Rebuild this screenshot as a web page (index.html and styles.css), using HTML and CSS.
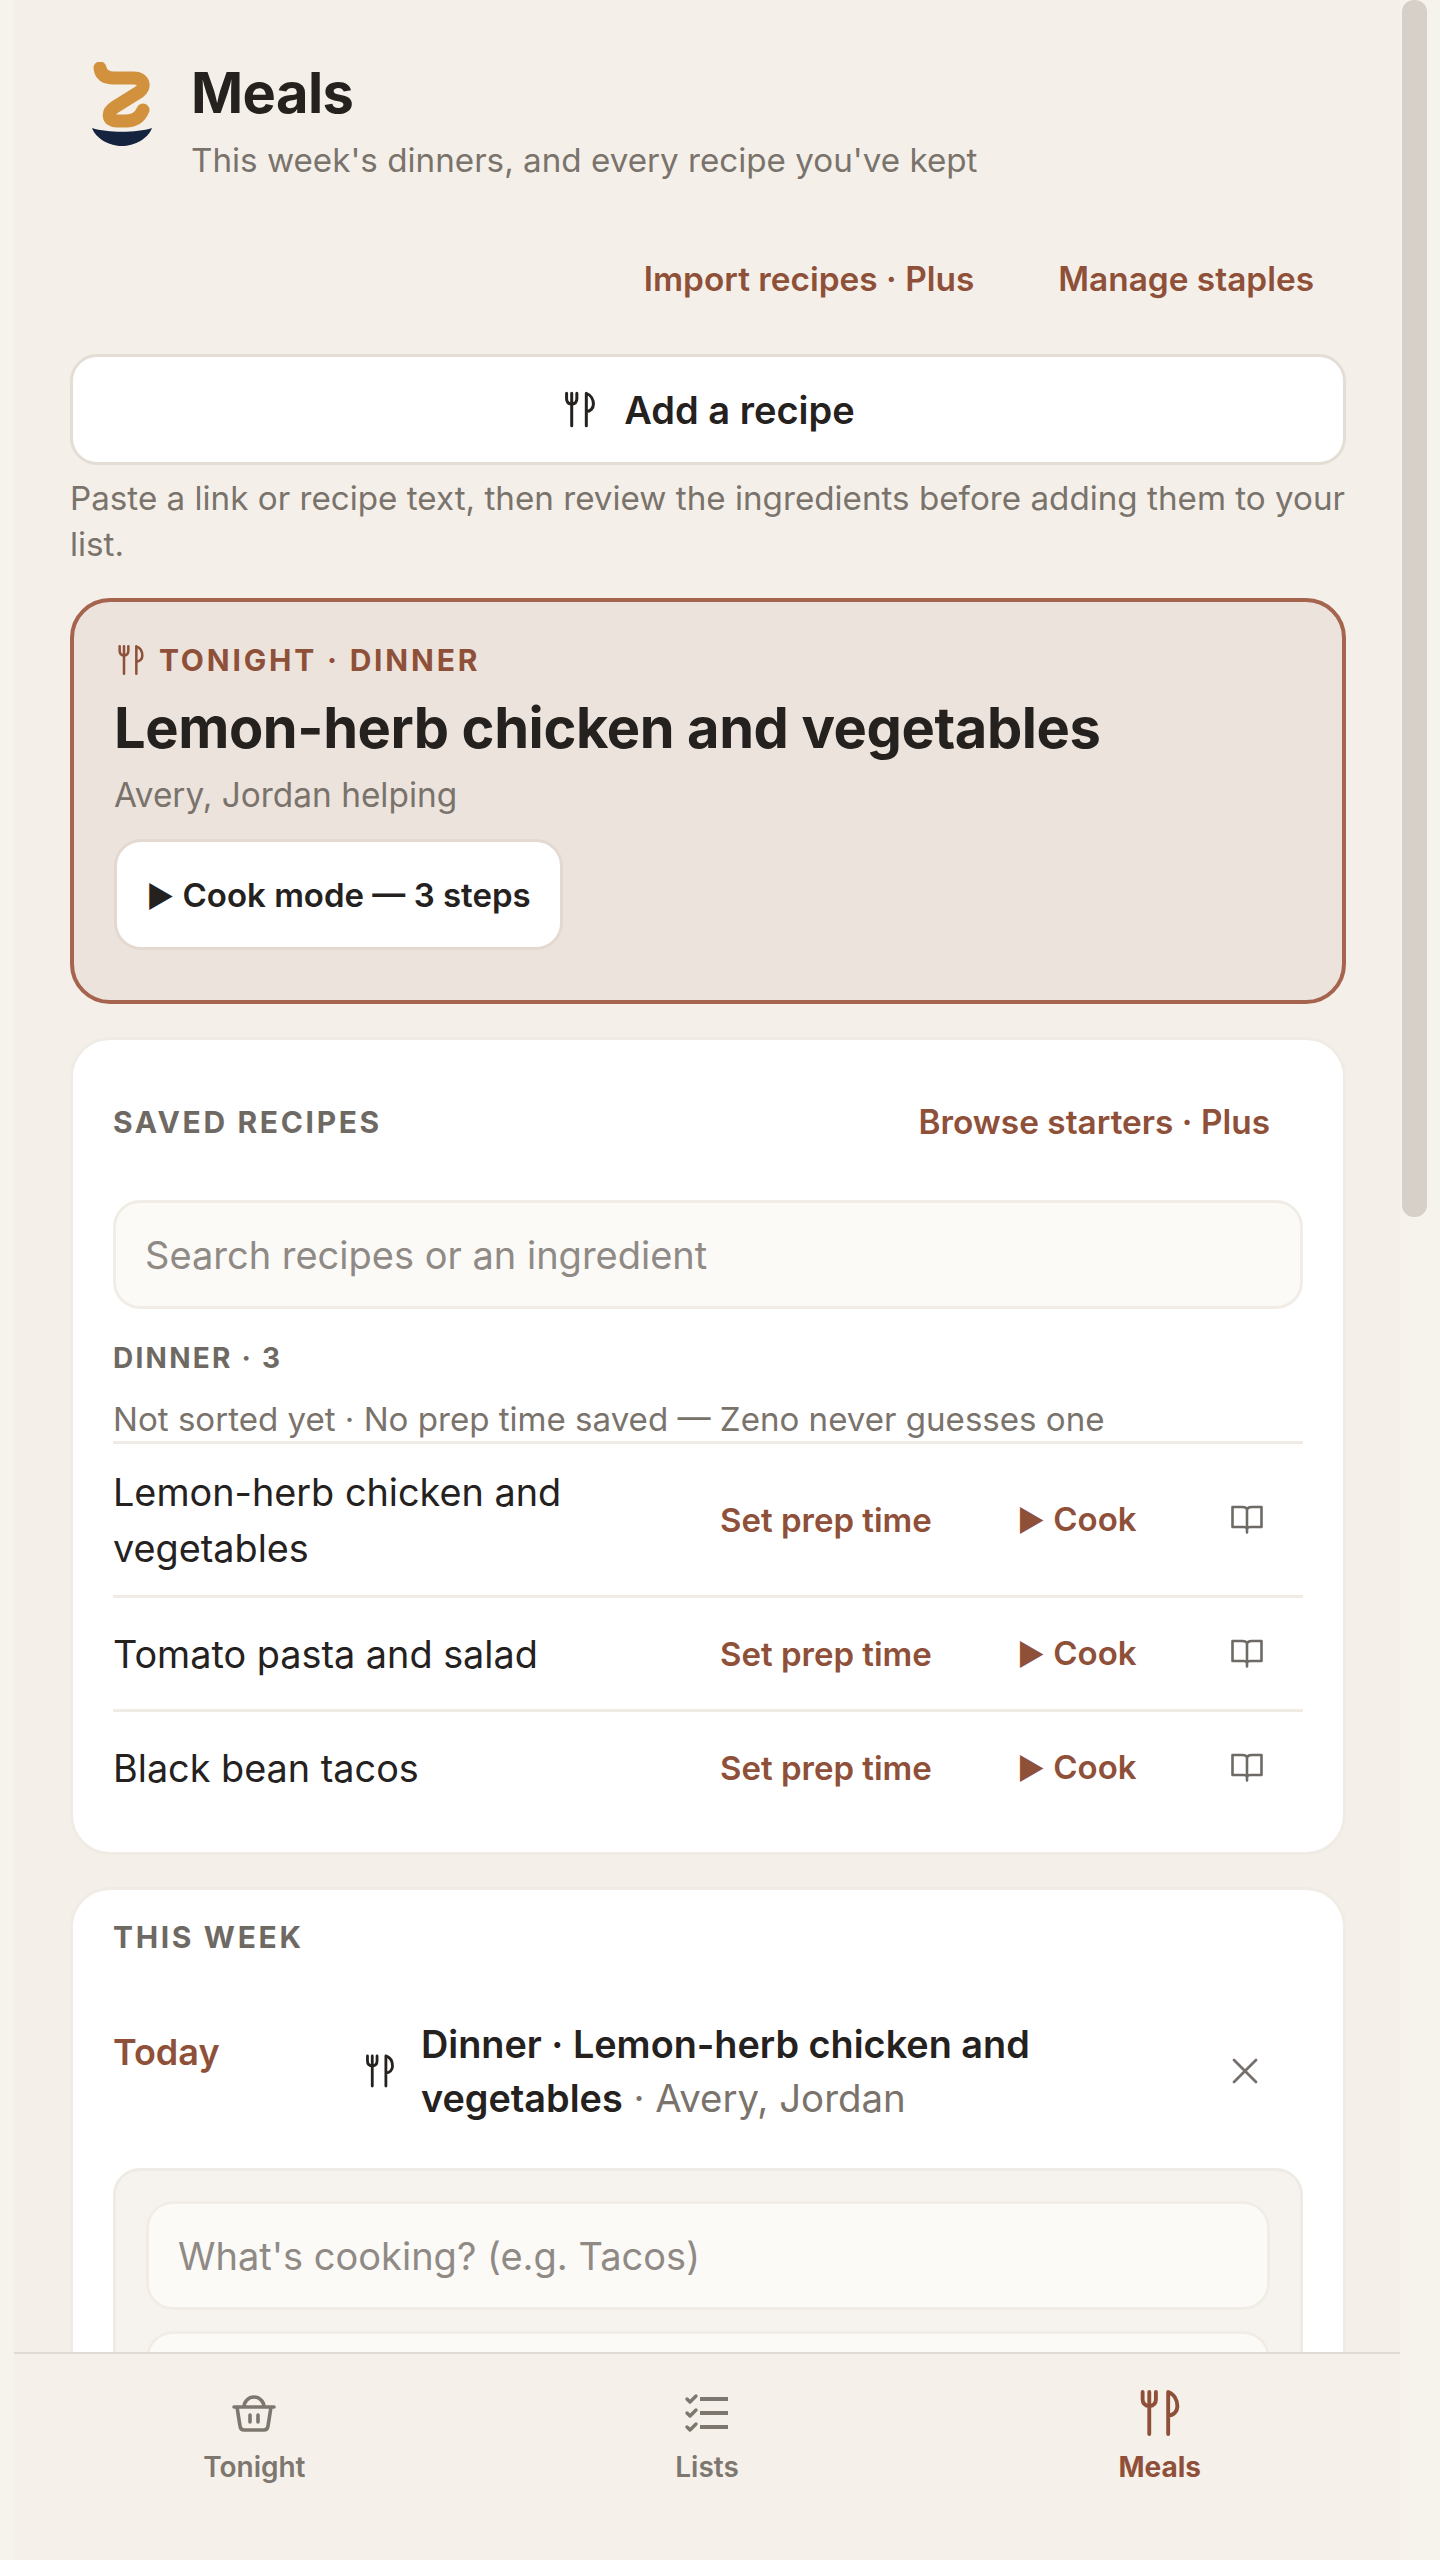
FILE: index.html

```html
<!DOCTYPE html>
<html lang="en">
<head>
    <meta charset="UTF-8" />
    <meta name="viewport" content="width=device-width, initial-scale=1.0" />
    <title>Meals</title>
    <link rel="stylesheet" href="styles.css">
</head>
<body>
    <svg class="sprites" aria-hidden="true">
        <symbol id="utensils" viewBox="0 0 38 45">
            <path d="M2 2v7q0 6 6.500 7 6.500-1 6.500-7V2M8.500 2v41" fill="none" stroke="currentColor" stroke-width="3.800" stroke-linecap="round"/>
            <path d="M27 43V2c6 2 9 8 9 14 0 5-4 9-9 9" fill="none" stroke="currentColor" stroke-width="3.800" stroke-linecap="round" stroke-linejoin="round"/>
        </symbol>
        <symbol id="book" viewBox="0 0 32 29">
            <path d="M1.500 2h10c2 0 4.500 1 4.500 3 0-2 2.500-3 4.500-3h10v20h-11c-2 0-3.500 1-3.500 2 0-1-1.500-2-3.500-2h-11zM16 5v22.500" fill="none" stroke="currentColor" stroke-width="2.600" stroke-linejoin="round" stroke-linecap="round"/>
        </symbol>
    </svg>

    <div class="app">
        <main class="main">
            <header class="page-head">
                <svg class="logo" viewBox="0 0 68 86" aria-hidden="true">
                    <path d="M12 6C13 13 18 16 26 16L46 16C56 16 58 25 51 30L27 45C19 50 19 59 29 59L38 59C46 59 52 55 55 48" fill="none" stroke="#d2913c" stroke-width="13" stroke-linecap="round" stroke-linejoin="round"/>
                    <path d="M4 66C20 71 48 71 64 66 60 77 46 84 34 84 22 84 8 77 4 66z" fill="#16233f"/>
                </svg>
                <div>
                    <h1 class="page-title">Meals</h1>
                    <p class="page-sub">This week's dinners, and every recipe you've kept</p>
                </div>
            </header>

            <div class="top-links">
                <a class="link">Import recipes · Plus</a>
                <a class="link">Manage staples</a>
            </div>

            <button class="add-btn">
                <svg class="icon-utensils-md"><use href="#utensils"/></svg>
                Add a recipe
            </button>
            <p class="hint">Paste a link or recipe text, then review the ingredients before adding them to your list.</p>

            <section class="tonight">
                <div class="tonight-label">
                    <svg class="icon-utensils-sm"><use href="#utensils"/></svg>
                    Tonight · Dinner
                </div>
                <h2 class="tonight-title">Lemon-herb chicken and vegetables</h2>
                <p class="tonight-who">Avery, Jordan helping</p>
                <button class="cook-btn"><span class="play">▶</span> Cook mode — 3 steps</button>
            </section>

            <section class="card saved">
                <div class="card-head">
                    <h3 class="section-label">Saved recipes</h3>
                    <a class="link browse">Browse starters · Plus</a>
                </div>
                <input class="field" placeholder="Search recipes or an ingredient" />
                <h4 class="group-label">Dinner · 3</h4>
                <p class="group-note">Not sorted yet · No prep time saved — Zeno never guesses one</p>

                <div class="recipe-row">
                    <span class="recipe-name">Lemon-herb chicken and vegetables</span>
                    <a class="link act-prep">Set prep time</a>
                    <a class="link act-cook"><span class="play">▶</span> Cook</a>
                    <svg class="icon-book"><use href="#book"/></svg>
                </div>
                <div class="recipe-row">
                    <span class="recipe-name">Tomato pasta and salad</span>
                    <a class="link act-prep">Set prep time</a>
                    <a class="link act-cook"><span class="play">▶</span> Cook</a>
                    <svg class="icon-book"><use href="#book"/></svg>
                </div>
                <div class="recipe-row">
                    <span class="recipe-name">Black bean tacos</span>
                    <a class="link act-prep">Set prep time</a>
                    <a class="link act-cook"><span class="play">▶</span> Cook</a>
                    <svg class="icon-book"><use href="#book"/></svg>
                </div>
            </section>

            <section class="card week">
                <h3 class="section-label">This week</h3>
                <div class="day-row">
                    <span class="day-name">Today</span>
                    <svg class="icon-utensils-day"><use href="#utensils"/></svg>
                    <p class="day-meal"><b>Dinner · Lemon-herb chicken and vegetables</b> · Avery, Jordan</p>
                    <svg class="icon-close" viewBox="0 0 26 26"><path d="M2 2l22 22M24 2L2 24" fill="none" stroke="currentColor" stroke-width="2.800" stroke-linecap="round"/></svg>
                </div>
                <div class="add-form">
                    <input class="field" placeholder="What's cooking? (e.g. Tacos)" />
                    <input class="field" />
                </div>
            </section>
        </main>

        <nav class="tabs">
            <a class="tab">
                <svg class="tab-icon" viewBox="0 0 46 46">
                    <path d="M3 17h40M6 17l3 19q.6 4 4 4h20q3.400 0 4-4l3-19M13 17a10 10 0 0 1 20 0M19 25v7M27 25v7" fill="none" stroke="currentColor" stroke-width="3.600" stroke-linecap="round" stroke-linejoin="round"/>
                </svg>
                Tonight
            </a>
            <a class="tab">
                <svg class="tab-icon" viewBox="0 0 46 46">
                    <path d="M3 9l3 3 6-6M3 23l3 3 6-6M3 37l3 3 6-6" fill="none" stroke="currentColor" stroke-width="3.400" stroke-linecap="round" stroke-linejoin="round"/>
                    <path d="M16 9h28M16 23h28M16 37h28" fill="none" stroke="currentColor" stroke-width="3.800"/>
                </svg>
                Lists
            </a>
            <a class="tab tab-active">
                <svg class="tab-icon"><use href="#utensils"/></svg>
                Meals
            </a>
        </nav>
    </div>

    <div class="scroll-thumb"></div>
</body>
</html>
```

FILE: styles.css

```css
* {
    box-sizing: border-box;
}
html, body {
    margin: 0;
    height: 2560px;
    overflow: hidden;
}
body {
    background: #f6f2ec;
    font-family: Inter, "Noto Sans", sans-serif;
    color: #24211e;
}
.sprites {
    display: none;
}
.app {
    position: relative;
    margin-left: 14px;
    width: 1386px;
    height: 2560px;
    overflow: hidden;
    background: #f4f0e9;
}
.main {
    width: 1332px;
    padding: 60px 0 0 56px;
}
h1, h2, h3, h4, p {
    margin: 0;
}
.page-head {
    display: flex;
    align-items: flex-start;
    padding-left: 18px;
    gap: 35px;
}
.logo {
    width: 68px;
    height: 86px;
    margin-top: 2px;
    flex: none;
}
.page-title {
    font-size: 56px;
    line-height: 66px;
    font-weight: 700;
    letter-spacing: -0.01em;
}
.page-sub {
    margin-top: 11px;
    font-size: 33.2px;
    line-height: 46px;
    color: #7a736c;
}
.link {
    font-size: 33.4px;
    line-height: 46px;
    font-weight: 600;
    color: #8f5039;
}
.play {
    font-size: 0.9em;
}
.top-links {
    display: flex;
    justify-content: flex-end;
    gap: 84px;
    margin-top: 73px;
    padding-right: 32px;
}
.add-btn {
    display: flex;
    align-items: center;
    justify-content: center;
    gap: 29px;
    width: 100%;
    height: 111px;
    margin-top: 52px;
    padding-left: 10px;
    background: #fff;
    border: 3px solid #e3ddd5;
    border-radius: 27px;
    font: 600 38px Inter, sans-serif;
    color: #24211e;
}
.icon-utensils-md {
    width: 30px;
    height: 39px;
}
.hint {
    margin-top: 10px;
    font-size: 33.2px;
    line-height: 46px;
    color: #7a736c;
}
.tonight {
    margin-top: 31px;
    height: 406px;
    padding: 38px 40px 0;
    background: #ece3dc;
    border: 4px solid #a5644e;
    border-radius: 40px;
}
.tonight-label {
    display: flex;
    align-items: center;
    gap: 15px;
    font-size: 30px;
    line-height: 40px;
    font-weight: 700;
    letter-spacing: 2.8px;
    text-transform: uppercase;
    color: #8f5039;
}
.icon-utensils-sm {
    width: 26px;
    height: 30px;
    margin-left: 4px;
}
.tonight-title {
    margin-top: 14px;
    font-size: 56px;
    line-height: 68px;
    font-weight: 700;
    letter-spacing: -0.4px;
}
.tonight-who {
    margin-top: 10px;
    font-size: 33.4px;
    line-height: 46px;
    color: #7a736c;
}
.cook-btn {
    display: block;
    height: 111px;
    width: 449px;
    margin-top: 21px;
    background: #fff;
    border: 3px solid #e3d9d1;
    border-radius: 27px;
    font: 600 33px Inter, "DejaVu Sans", sans-serif;
    color: #24211e;
}
.card {
    background: #fff;
    border: 3px solid #f0ebe4;
    border-radius: 40px;
    padding: 0 40px;
}
.saved {
    margin-top: 33px;
    padding-top: 59px;
    padding-bottom: 29px;
}
.card-head {
    display: flex;
    align-items: center;
    justify-content: space-between;
    padding-right: 33px;
}
.section-label {
    font-size: 30px;
    line-height: 46px;
    font-weight: 700;
    letter-spacing: 2.65px;
    text-transform: uppercase;
    color: #6f6963;
}
.field {
    display: block;
    width: 100%;
    height: 109px;
    padding: 0 29px;
    background: #fcfaf7;
    border: 3px solid #f1ede6;
    border-radius: 27px;
    font: 400 38px Inter, sans-serif;
    color: #24211e;
}
.field::placeholder {
    color: #8f8a85;
    opacity: 1;
}
.saved .field {
    margin-top: 55px;
}
.group-label {
    margin-top: 29px;
    font-size: 28px;
    line-height: 40px;
    font-weight: 700;
    letter-spacing: 0.08em;
    text-transform: uppercase;
    color: #6f6963;
}
.group-note {
    margin-top: 18px;
    font-size: 33.1px;
    line-height: 46px;
    margin-bottom: -1px;
    color: #7a736c;
}
.recipe-row {
    display: flex;
    align-items: center;
    min-height: 114px;
    padding: 19.5px 0;
    border-top: 3px solid #f0ece5;
}
.recipe-name {
    flex: 1;
    padding-right: 100px;
    font-size: 37.8px;
    line-height: 56px;
}
.act-prep {
    width: 297px;
    font-size: 33px;
}
.act-cook {
    width: 214px;
    font-size: 33px;
    font-family: Inter, "DejaVu Sans", sans-serif;
}
.icon-book {
    width: 32px;
    height: 29px;
    margin-right: 40px;
    color: #6e6a65;
}
.week {
    margin-top: 32px;
    padding-top: 27px;
    padding-bottom: 30px;
}
.week .section-label {
    line-height: 40px;
}
.day-row {
    display: flex;
    align-items: center;
    margin-top: 60px;
}
.day-name {
    width: 253px;
    align-self: flex-start;
    margin-top: 8px;
    font-size: 36px;
    line-height: 54px;
    font-weight: 600;
    color: #8f5039;
}
.icon-utensils-day {
    width: 28px;
    height: 34px;
    margin-right: 27px;
}
.day-meal {
    width: 811px;
    font-size: 38.4px;
    line-height: 54px;
    color: #7a736c;
}
.day-meal b {
    font-size: 37.8px;
    font-weight: 600;
    color: #24211e;
}
.icon-close {
    width: 26px;
    height: 26px;
    color: #75706b;
}
.add-form {
    display: flex;
    flex-direction: column;
    gap: 21px;
    margin-top: 43px;
    padding: 30px;
    background: #f6f3ee;
    border: 3px solid #efeae4;
    border-radius: 27px;
}
.tabs {
    position: absolute;
    left: 0;
    top: 2352px;
    width: 1386px;
    height: 208px;
    display: flex;
    padding: 0 14px;
    background: #f5f1ea;
    border-top: 2px solid #dfdad3;
}
.tab {
    flex: 1;
    display: flex;
    flex-direction: column;
    align-items: center;
    padding-top: 36px;
    font-size: 28px;
    line-height: 46px;
    font-weight: 600;
    color: #7d7770;
}
.tab-icon {
    width: 46px;
    height: 46px;
    margin-bottom: 8px;
}
.tab-active {
    font-weight: 700;
    color: #8f5039;
}
.scroll-thumb {
    position: absolute;
    left: 1402px;
    top: 0;
    width: 25px;
    height: 1217px;
    background: #d6d0c9;
    border-radius: 12px;
}
```
